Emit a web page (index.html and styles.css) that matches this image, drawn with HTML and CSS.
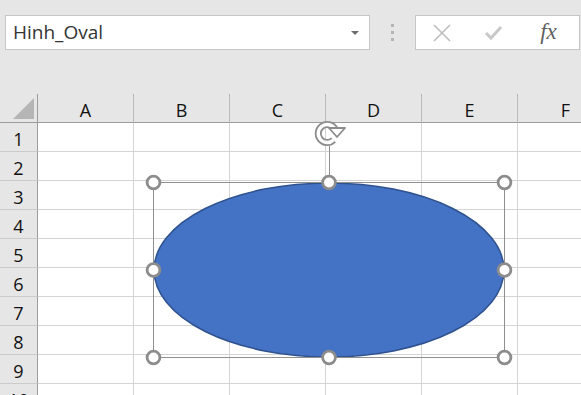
FILE: index.html
```html
<!DOCTYPE html>
<html lang="vi">
<head>
	<meta charset="UTF-8">
	<title>Hinh_Oval</title>
	<link rel="stylesheet" href="styles.css">
</head>
<body>
	<div class="toolbar">
		<div class="name_box">
			<span class="name_text">Hinh_Oval</span>
			<span class="drop_arrow"></span>
		</div>
		<div class="grip">
			<i></i><i></i><i></i>
		</div>
		<div class="formula_box">
			<svg class="fb_icon" width="20" height="20" viewBox="0 0 20 20">
				<path d="M2 2 L18 18 M18 2 L2 18" stroke="#bdbdbd" stroke-width="1.6" fill="none"/>
			</svg>
			<svg class="fb_icon" width="20" height="20" viewBox="0 0 20 20">
				<path d="M2 10 L7 15 L17 4" stroke="#c8c8c8" stroke-width="3" fill="none"/>
			</svg>
			<span class="fx">fx</span>
		</div>
	</div>

	<div class="sheet">
		<div class="grid">
			<div class="corner"><span class="corner_tri"></span></div>
			<div class="col_head">A</div>
			<div class="col_head">B</div>
			<div class="col_head">C</div>
			<div class="col_head">D</div>
			<div class="col_head">E</div>
			<div class="col_head">F</div>

			<div class="row_head">1</div>
			<div class="cell"></div><div class="cell"></div><div class="cell"></div><div class="cell"></div><div class="cell"></div><div class="cell"></div>
			<div class="row_head">2</div>
			<div class="cell"></div><div class="cell"></div><div class="cell"></div><div class="cell"></div><div class="cell"></div><div class="cell"></div>
			<div class="row_head">3</div>
			<div class="cell"></div><div class="cell"></div><div class="cell"></div><div class="cell"></div><div class="cell"></div><div class="cell"></div>
			<div class="row_head">4</div>
			<div class="cell"></div><div class="cell"></div><div class="cell"></div><div class="cell"></div><div class="cell"></div><div class="cell"></div>
			<div class="row_head">5</div>
			<div class="cell"></div><div class="cell"></div><div class="cell"></div><div class="cell"></div><div class="cell"></div><div class="cell"></div>
			<div class="row_head">6</div>
			<div class="cell"></div><div class="cell"></div><div class="cell"></div><div class="cell"></div><div class="cell"></div><div class="cell"></div>
			<div class="row_head">7</div>
			<div class="cell"></div><div class="cell"></div><div class="cell"></div><div class="cell"></div><div class="cell"></div><div class="cell"></div>
			<div class="row_head">8</div>
			<div class="cell"></div><div class="cell"></div><div class="cell"></div><div class="cell"></div><div class="cell"></div><div class="cell"></div>
			<div class="row_head">9</div>
			<div class="cell"></div><div class="cell"></div><div class="cell"></div><div class="cell"></div><div class="cell"></div><div class="cell"></div>
			<div class="row_head">10</div>
			<div class="cell"></div><div class="cell"></div><div class="cell"></div><div class="cell"></div><div class="cell"></div><div class="cell"></div>
		</div>

		<!-- shape drawn over the cells -->
		<svg class="shape_layer" width="581" height="301" viewBox="0 0 581 301">
			<ellipse cx="329" cy="176" rx="175" ry="87" fill="#4472c4" stroke="#2f528f" stroke-width="1.5"/>
			<rect x="153.5" y="88.5" width="351" height="175" fill="none" stroke="#8f8f8f" stroke-width="1"/>
			<line x1="329.5" y1="52" x2="329.5" y2="82" stroke="#8f8f8f" stroke-width="1"/>

			<g class="rotate">
				<path d="M335 35 A9 9 0 1 0 333.5 46" fill="none" stroke="#8c8c8c" stroke-width="7"/>
				<path d="M335 35 A9 9 0 1 0 333.5 46" fill="none" stroke="#fff" stroke-width="3.4"/>
				<polygon points="329,34 345,34 337,43" fill="#fff" stroke="#8c8c8c" stroke-width="1.8" stroke-linejoin="round"/>
			</g>

			<g fill="#fff" stroke="#8c8c8c" stroke-width="2.8">
				<circle cx="153.5" cy="88.5" r="6.4"/>
				<circle cx="329" cy="88.5" r="6.4"/>
				<circle cx="504.5" cy="88.5" r="6.4"/>
				<circle cx="153.5" cy="176" r="6.4"/>
				<circle cx="504.5" cy="176" r="6.4"/>
				<circle cx="153.5" cy="263.5" r="6.4"/>
				<circle cx="329" cy="263.5" r="6.4"/>
				<circle cx="504.5" cy="263.5" r="6.4"/>
			</g>
		</svg>
	</div>
</body>
</html>
```

FILE: styles.css
```css
html, body{
	margin: 0;
	padding: 0;
}
body{
	width: 581px;
	height: 395px;
	overflow: hidden;
	background: #e6e6e6;
	font-family: "Open Sans", "Noto Sans", sans-serif;
}
.toolbar{
	height: 94px;
	box-sizing: border-box;
	padding: 15px 0 0 5px;
	display: flex;
	align-items: flex-start;
}
.name_box{
	width: 365px;
	height: 35px;
	box-sizing: border-box;
	border: 1px solid #c6c6c6;
	background: #fff;
	display: flex;
	align-items: center;
	justify-content: space-between;
	padding: 0 10px 0 7px;
}
.name_text{
	font-size: 19px;
	color: #333;
	line-height: 1;
}
.drop_arrow{
	width: 0;
	height: 0;
	border-left: 4px solid transparent;
	border-right: 4px solid transparent;
	border-top: 4px solid #6d6d6d;
}
.grip{
	width: 45px;
	height: 35px;
	display: flex;
	flex-direction: column;
	align-items: center;
	justify-content: center;
	gap: 4px;
}
.grip i{
	display: block;
	width: 3px;
	height: 3px;
	background: #b4b4b4;
}
.formula_box{
	width: 165px;
	height: 35px;
	box-sizing: border-box;
	border: 1px solid #c6c6c6;
	background: #fff;
	display: grid;
	grid-template-columns: 52px 52px 57px;
	align-items: center;
	justify-items: center;
}
.fx{
	font-family: "Liberation Serif", serif;
	font-style: italic;
	font-size: 23px;
	color: #5f5f5f;
	line-height: 1;
	margin-top: -3px;
}
.sheet{
	position: relative;
}
.grid{
	display: grid;
	grid-template-columns: 38px repeat(6, 96px);
	grid-auto-rows: 29px;
	width: max-content;
}
.grid > div{
	box-sizing: border-box;
}
.corner{
	position: relative;
	background: #e6e6e6;
	border-right: 1px solid #9c9c9c;
	border-bottom: 1px solid #9c9c9c;
}
.corner_tri{
	position: absolute;
	right: 3px;
	bottom: 3px;
	width: 0;
	height: 0;
	border-left: 21px solid transparent;
	border-bottom: 21px solid #b5b5b5;
}
.col_head{
	background: #e6e6e6;
	border-right: 1px solid #b9b9b9;
	border-bottom: 1px solid #9c9c9c;
	display: flex;
	align-items: center;
	justify-content: center;
	padding-top: 3px;
	font-size: 18px;
	color: #111;
}
.row_head{
	background: #e6e6e6;
	border-right: 1px solid #9c9c9c;
	border-bottom: 1px solid #cbcbcb;
	display: flex;
	align-items: center;
	justify-content: center;
	padding-top: 3px;
	font-size: 18px;
	color: #111;
}
.cell{
	background: #fff;
	border-right: 1px solid #d4d4d4;
	border-bottom: 1px solid #d4d4d4;
}
.shape_layer{
	position: absolute;
	left: 0;
	top: 0;
}
```
